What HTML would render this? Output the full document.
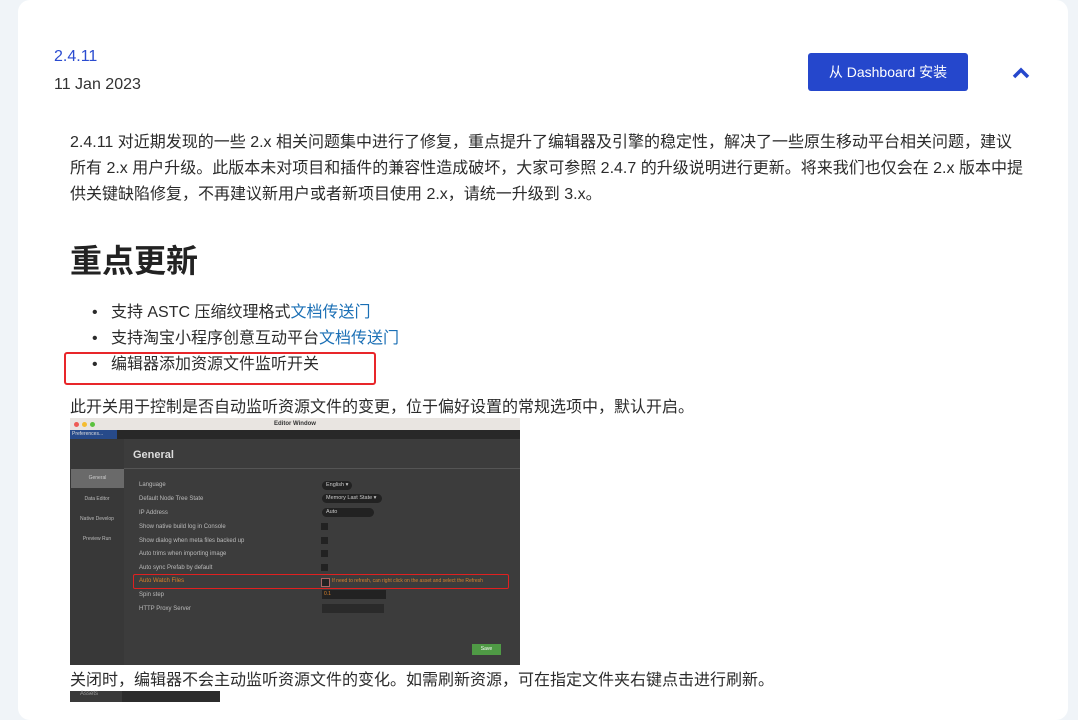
<!DOCTYPE html>
<html><head><meta charset="utf-8"><style>
body{margin:0;width:1078px;height:702px;overflow:hidden;background:#f0f4f8;font-family:"Liberation Sans","Noto Sans CJK SC",sans-serif;color:#333;position:relative}
.card{position:absolute;left:18px;top:0;width:1050px;height:720px;background:#fff;border-radius:12px}
.a{position:absolute;white-space:nowrap}
.t{font-size:16px;color:#2b2b2b}
.ed{position:absolute;left:70px;top:418px;width:450px;height:247px;background:#3c3c3c;overflow:hidden;font-size:6px;color:#bbb}
.ed .a{font-size:6px}
.cb{position:absolute;width:7px;height:7px;background:#222;left:251px}
.pill{position:absolute;left:252px;height:9px;background:#222;border-radius:5px;font-size:5.5px;color:#ccc;padding-left:4px;line-height:9px}
</style></head><body>
<div class="card"></div>
<div class="a" style="left:54px;top:48px;font-size:16px;color:#2a4bd0">2.4.11</div>
<div class="a" style="left:54px;top:76px;font-size:16px;color:#333">11 Jan 2023</div>
<div class="a" style="left:808px;top:53px;width:160px;height:38px;background:#2547cc;border-radius:3px;color:#fff;font-size:14px;line-height:38px;text-align:center">从 Dashboard 安装</div>
<svg class="a" style="left:1011px;top:66px" width="20" height="14"><path d="M3 11 L10 4 L17 11" stroke="#2547cc" stroke-width="3.5" fill="none"/></svg>
<div class="a t" style="left:70px;top:130px;line-height:26px;white-space:normal;width:954px">2.4.11 对近期发现的一些 2.x 相关问题集中进行了修复，重点提升了编辑器及引擎的稳定性，解决了一些原生移动平台相关问题，建议所有 2.x 用户升级。此版本未对项目和插件的兼容性造成破坏，大家可参照 2.4.7 的升级说明进行更新。将来我们也仅会在 2.x 版本中提供关键缺陷修复，不再建议新用户或者新项目使用 2.x，请统一升级到 3.x。</div>
<div class="a" style="left:70px;top:236px;font-size:32px;font-weight:bold;color:#222">重点更新</div>
<div class="a t" style="left:92px;top:300px;line-height:26px">•&nbsp;&nbsp;&nbsp;支持 ASTC 压缩纹理格式<span style="color:#1a6fb5">文档传送门</span><br>•&nbsp;&nbsp;&nbsp;支持淘宝小程序创意互动平台<span style="color:#1a6fb5">文档传送门</span><br>•&nbsp;&nbsp;&nbsp;编辑器添加资源文件监听开关</div>
<div class="a" style="left:64px;top:352px;width:308px;height:29px;border:2px solid #e8262a;border-radius:3px"></div>
<div class="a t" style="left:70px;top:393px">此开关用于控制是否自动监听资源文件的变更，位于偏好设置的常规选项中，默认开启。</div>
<div class="ed">
<div class="a" style="left:0;top:0;width:450px;height:12px;background:#e9e5e1;color:#333;font-size:6px;text-align:center;line-height:12px;font-weight:bold">Editor Window</div>
<div class="a" style="left:4px;top:4px;width:5px;height:5px;border-radius:3px;background:#ee5b55"></div>
<div class="a" style="left:12px;top:4px;width:5px;height:5px;border-radius:3px;background:#f5bd30"></div>
<div class="a" style="left:20px;top:4px;width:5px;height:5px;border-radius:3px;background:#5bc23f"></div>
<div class="a" style="left:0;top:12px;width:450px;height:9px;background:#282828"></div>
<div class="a" style="left:0;top:12px;width:45px;height:9px;background:#274a8a;color:#ddd;font-size:5px;line-height:9px;padding-left:2px">Preferences...</div>
<div class="a" style="left:0;top:21px;width:54px;height:226px;background:#383838"></div>
<div class="a" style="left:1px;top:51px;width:53px;height:19px;background:#6a6a6a;color:#ccc;font-size:5px;text-align:center;line-height:19px">General</div>
<div class="a" style="left:0;top:78px;width:54px;text-align:center;font-size:5px">Data Editor</div>
<div class="a" style="left:0;top:98px;width:54px;text-align:center;font-size:5px">Native Develop</div>
<div class="a" style="left:0;top:118px;width:54px;text-align:center;font-size:5px">Preview Run</div>
<div class="a" style="left:63px;top:31px;font-size:11px;font-weight:bold;color:#ddd">General</div>
<div class="a" style="left:54px;top:50px;width:396px;height:1px;background:#555"></div>
<div class="a" style="left:69px;top:64px">Language</div><div class="pill" style="top:63px;width:26px">English ▾</div>
<div class="a" style="left:69px;top:78px">Default Node Tree State</div><div class="pill" style="top:76px;width:56px">Memory Last State ▾</div>
<div class="a" style="left:69px;top:92px">IP Address</div><div class="pill" style="top:90px;width:48px">Auto</div>
<div class="a" style="left:69px;top:106px">Show native build log in Console</div><div class="cb" style="top:105px"></div>
<div class="a" style="left:69px;top:120px">Show dialog when meta files backed up</div><div class="cb" style="top:119px"></div>
<div class="a" style="left:69px;top:133px">Auto trims when importing image</div><div class="cb" style="top:132px"></div>
<div class="a" style="left:69px;top:147px">Auto sync Prefab by default</div><div class="cb" style="top:146px"></div>
<div class="a" style="left:69px;top:160px;color:#d9822b">Auto Watch Files</div><div class="cb" style="top:160px;border:1px solid #a66"></div>
<div class="a" style="left:262px;top:160px;color:#d9822b;font-size:5px">If need to refresh, can right click on the asset and select the Refresh</div>
<div class="a" style="left:63px;top:156px;width:374px;height:13px;border:1px solid #e02020;border-radius:2px"></div>
<div class="a" style="left:69px;top:174px">Spin step</div><div class="a" style="left:252px;top:172px;width:62px;height:9px;background:#222;color:#d9822b;font-size:5px;line-height:9px;padding-left:2px">0.1</div>
<div class="a" style="left:69px;top:188px">HTTP Proxy Server</div><div class="a" style="left:252px;top:186px;width:62px;height:9px;background:#2a2a2a"></div>
<div class="a" style="left:402px;top:226px;width:29px;height:11px;background:#4f9a45;color:#fff;font-size:5px;text-align:center;line-height:11px">Save</div>
</div>
<div class="a t" style="left:70px;top:666px">关闭时，编辑器不会主动监听资源文件的变化。如需刷新资源，可在指定文件夹右键点击进行刷新。</div>
<div class="a" style="left:70px;top:691px;width:150px;height:11px;background:#2c2c2c"></div>
<div class="a" style="left:70px;top:691px;width:52px;height:11px;background:#3a3a3a;color:#999;font-size:6px;padding-left:10px;box-sizing:border-box">Assets</div>
</body></html>
